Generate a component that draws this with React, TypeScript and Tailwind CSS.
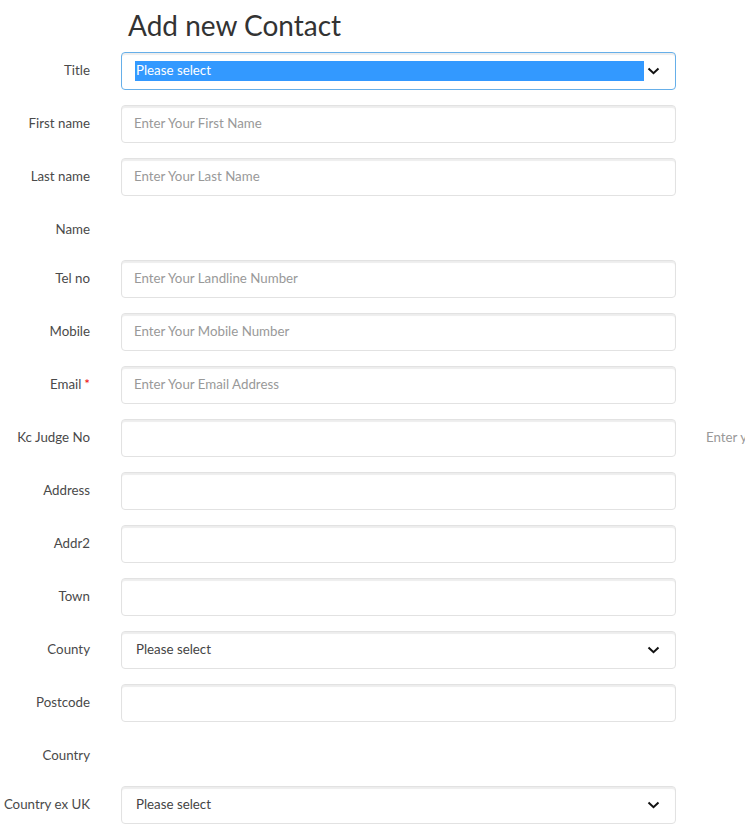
import React from 'react';

type Row =
  | { kind: 'input'; label: string; placeholder?: string; required?: boolean; help?: string }
  | { kind: 'select'; label: string; focused?: boolean }
  | { kind: 'text'; label: string };

const rows: Row[] = [
  { kind: 'select', label: 'Title', focused: true },
  { kind: 'input', label: 'First name', placeholder: 'Enter Your First Name' },
  { kind: 'input', label: 'Last name', placeholder: 'Enter Your Last Name' },
  { kind: 'text', label: 'Name' },
  { kind: 'input', label: 'Tel no', placeholder: 'Enter Your Landline Number' },
  { kind: 'input', label: 'Mobile', placeholder: 'Enter Your Mobile Number' },
  { kind: 'input', label: 'Email', placeholder: 'Enter Your Email Address', required: true },
  { kind: 'input', label: 'Kc Judge No', help: 'Enter your Kennel Club judge number' },
  { kind: 'input', label: 'Address' },
  { kind: 'input', label: 'Addr2' },
  { kind: 'input', label: 'Town' },
  { kind: 'select', label: 'County' },
  { kind: 'input', label: 'Postcode' },
  { kind: 'text', label: 'Country' },
  { kind: 'select', label: 'Country ex UK' },
];

function Chevron() {
  return (
    <svg width="13" height="8" viewBox="0 0 13 8" className="shrink-0">
      <path d="M1.5 1.5 L6.5 6.2 L11.5 1.5" fill="none" stroke="#111" strokeWidth="2" />
    </svg>
  );
}

const box =
  'h-[38px] w-[555px] shrink-0 rounded-[4px] border bg-white shadow-[inset_0_2px_1px_rgba(0,0,0,0.07)]';

function Field({ row }: { row: Row }) {
  if (row.kind === 'text') return null;
  if (row.kind === 'select') {
    if (row.focused) {
      return (
        <div
          className={`${box} flex items-center border-[#66afe9] pr-[15px] pl-[13px] shadow-[0_0_5px_rgba(102,175,233,0.6)]`}
        >
          <span className="mr-[3px] flex h-[20px] flex-1 items-center bg-[#3399ff] pl-[1px] text-[13.3px] text-white">
            Please select
          </span>
          <Chevron />
        </div>
      );
    }
    return (
      <div className={`${box} flex items-center justify-between border-[#e2e2e2] pr-[15px] pl-[14px]`}>
        <span className="text-[13.3px] text-[#444]">Please select</span>
        <Chevron />
      </div>
    );
  }
  return (
    <div className={`${box} flex items-center border-[#e2e2e2] pl-[12px]`}>
      {row.placeholder && <span className="text-[13.3px] text-[#999]">{row.placeholder}</span>}
    </div>
  );
}

export default function App() {
  return (
    <div
      className="w-[745px] overflow-hidden bg-white text-[#4a4a4a]"
      style={{ fontFamily: '"Source Sans Pro", Lato, "Liberation Sans", sans-serif' }}
    >
      <h1 className="h-[52px] pt-[7px] pl-[128px] text-[28px] leading-[36px] font-normal text-[#333]">
        Add new Contact
      </h1>
      <div className="flex flex-col">
        {rows.map((row) => (
          <div key={row.label} className="mb-[15px] flex items-start">
            <label className="w-[106px] shrink-0 pt-[8px] pr-[16px] text-right text-[13.3px] leading-[20px] whitespace-nowrap">
              {row.label}
              {row.kind === 'input' && row.required && <span className="ml-[3px] text-[#e00]">*</span>}
            </label>
            {row.kind === 'text' ? (
              <div className="h-[34px]" />
            ) : (
              <div className="ml-[15px] flex items-start">
                <Field row={row} />
                {row.kind === 'input' && row.help && (
                  <span className="ml-[30px] pt-[8px] text-[13.3px] leading-[20px] whitespace-nowrap text-[#999]">
                    {row.help}
                  </span>
                )}
              </div>
            )}
          </div>
        ))}
      </div>
    </div>
  );
}
